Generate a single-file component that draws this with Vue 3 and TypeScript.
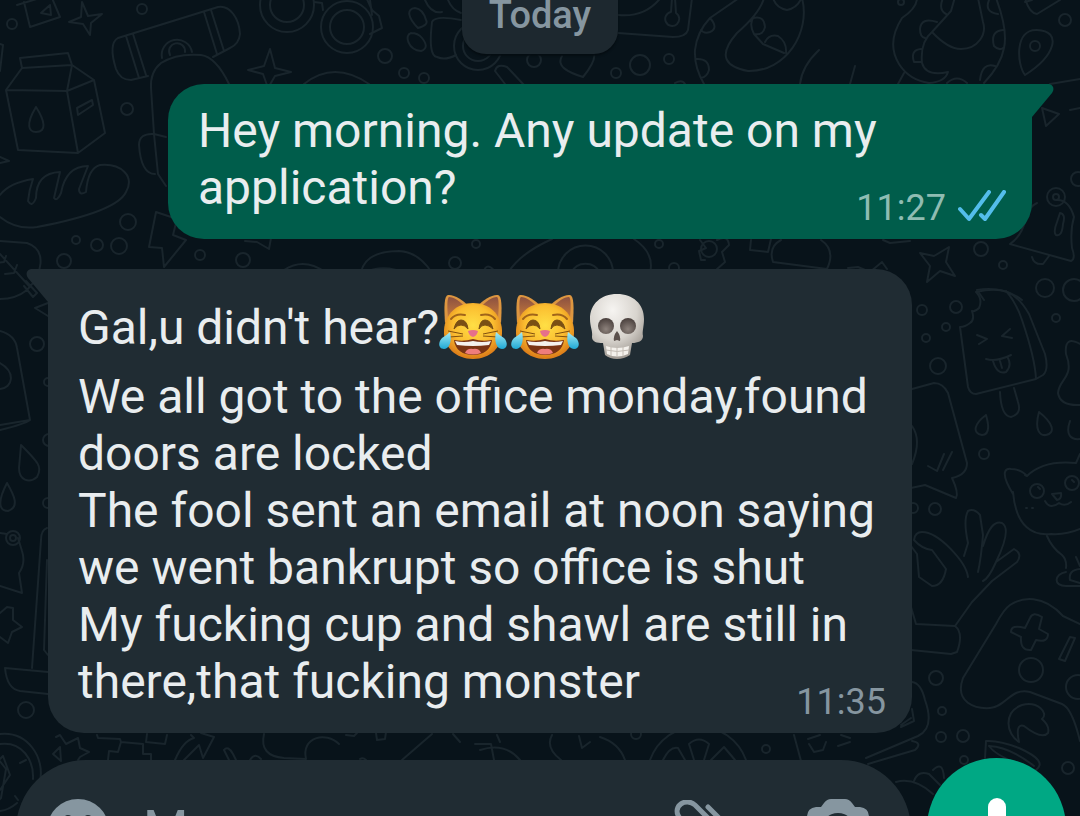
<script setup lang="ts">
import { ref } from 'vue'

type Circle = [number, number, number]

interface Message {
  id: number
  mine: boolean
  time: string
  lead?: string
  emojis: string[]
  lines: string[]
}

const draft = ref('')

const messages: Message[] = [
  {
    id: 1,
    mine: true,
    time: '11:27',
    emojis: [],
    lines: ['Hey morning. Any update on my application?'],
  },
  {
    id: 2,
    mine: false,
    time: '11:35',
    lead: "Gal,u didn't hear?",
    emojis: ['cat', 'cat', 'skull'],
    lines: [
      'We all got to the office monday,found doors are locked',
      'The fool sent an email at noon saying we went bankrupt so office is shut',
      'My fucking cup and shawl are still in there,that fucking monster',
    ],
  },
]

const dots: Circle[] = [
  [12, 24, 5], [142, 9, 5], [127, 109, 6], [128, 222, 8], [76, 240, 4], [97, 245, 6],
  [119, 246, 8], [64, 261, 7], [200, 255, 5], [243, 260, 7], [385, 56, 7], [404, 73, 5],
  [424, 78, 5], [534, 60, 7], [616, 73, 5], [640, 65, 10], [669, 59, 5], [901, 2, 3],
  [1065, 20, 6], [455, 263, 6], [476, 244, 4], [659, 244, 4], [674, 268, 5], [709, 249, 8],
  [981, 249, 7], [1003, 265, 4], [1045, 288, 9], [1074, 290, 11], [1078, 179, 7],
  [922, 310, 5], [956, 307, 6], [946, 327, 4], [926, 338, 4], [938, 366, 8], [1056, 318, 4],
  [984, 454, 5], [913, 508, 5], [935, 509, 6], [936, 678, 7], [942, 711, 4], [941, 737, 5],
  [963, 736, 6], [964, 760, 4], [1068, 768, 6], [1031, 670, 12], [1078, 687, 12],
  [37, 344, 7], [48, 382, 4], [49, 440, 6], [48, 503, 5], [26, 710, 8],
  [766, 749, 4], [636, 734, 5], [13, 538, 7], [13, 538, 3],
  [287, 5, 27], [287, 5, 17], [347, 27, 26], [347, 27, 17], [478, 46, 24], [478, 46, 15],
  [1035, 46, 5], [1056, 197, 9], [1056, 197, 3], [1037, 491, 7], [1072, 483, 7],
]

const doodles: string[] = [
  'M17 5 L40 -2 M24 2 L30 27 L60 17 L52 -2 M41 13 L50 5 L51 15 Z',
  'M82 2 L88 16 L102 14 L91 23 L90 35 L83 24 L69 22 L81 17 Z',
  'M20 58 L68 53 L72 65 L22 68 Z M22 68 L6 90 L67 91 L72 65 L94 80 L67 91 L78 153 L105 133 L94 80 M6 90 L18 150 L78 153',
  'M36 107 C25 125 29 132 36 132 C47 132 45 121 36 107 M77 108 L92 100 L93 105 L78 115 Z',
  'M0 44 L3 45 L0 71 M0 157 L9 161 L0 163',
  'M118 38 L218 7 C230 5 239 18 240 34 Q239 44 230 48 L213 57 M118 38 C111 42 111 53 116 69 Q120 80 131 80 L148 76 M126 36 L139 78 M133 34 L146 75 M204 12 L217 54 M211 10 L224 51',
  'M162 58 A15 15 0 1 1 192 52 M170 55 A8 8 0 1 1 185 52 M151 88 Q150 72 161 63 Q177 53 201 55 Q216 57 229 84 M151 88 L154 134 L166 137 M154 134 Q139 133 139 145 Q141 174 155 174 M154 134 L158 174 L166 186',
  'M270 49 L275 68 L291 72 L275 76 L268 88 L263 74 L248 70 L264 66 Z M304 84 Q334 60 369 84',
  'M0 195 Q9 183 33 179 Q29 190 28 201 Q32 208 36 198 Q36 173 60 172 L54 198 Q57 202 61 193 Q66 166 88 166 L79 189 Q79 196 86 192 Q88 168 100 165 C121 163 135 176 126 192 C118 209 74 220 37 227 Q16 230 0 217',
  'M156 212 L177 219 L173 235 L186 240 L164 267 L162 248 L149 247 Z M245 241 L257 242 L269 249 L271 238',
  'M0 241 L27 243 C48 250 42 275 27 290 Q16 299 0 299 M0 254 L30 287 M6 256 L4 262 L-3 263 M17 265 L14 273 L5 274 M24 286 L33 297 L37 293 L26 281',
  'M284 270 Q304 257 325 272 M361 272 Q366 251 399 251 Q419 252 432 273 M363 273 Q384 263 407 274 M483 273 Q487 260 496 273 M508 273 Q519 254 552 239 M634 239 Q655 253 650 273 M558 273 A27 27 0 0 1 613 273 M571 273 A16 16 0 0 1 600 273',
  'M700 240 L706 248 L699 251 L701 260 L705 260 M717 240 Q728 234 729 245 L722 252 L725 262 L716 270 L705 270 M751 240 L750 250 L768 252 L771 239 M781 240 Q768 247 773 262 L827 269 Q836 250 821 240',
  'M366 -3 L372 10 L379 16 L382 28 L370 34 M314 2 L322 3 L323 10 M370 0 L372 15',
  'M415 8 C406 9 408 18 418 28 Q429 25 426 20 Q423 9 415 8 M411 33 C404 35 408 50 421 51 Q430 48 422 38 Q418 33 411 33 M425 0 Q431 14 442 12 M448 0 Q452 10 461 13 M461 20 Q435 15 432 22 Q428 56 437 57 Q445 61 456 55 M495 71 Q497 63 507 67 L525 86 M495 71 L505 84',
  'M562 56 C556 66 567 72 583 77 Q596 61 594 54 M618 15 Q646 18 662 -4 M618 33 L673 37 Q686 37 688 30 L692 -2 M672 -2 L671 12 A7 7 0 1 0 676 13 L675 -2',
  'M739 -2 L710 18 Q697 32 695 50 Q694 67 704 84 M764 -2 Q760 13 737 33 C716 57 727 67 748 71 C786 72 811 32 802 -2 M773 -2 Q776 8 787 10 Q797 8 801 -1 M753 18 Q749 25 754 34 Q763 36 765 27 Q764 15 753 18 M754 34 L763 44 L784 53 M765 42 Q769 34 778 36 Q787 42 786 53 M710 18 Q719 28 710 32 Q704 34 701 30 M696 59 Q709 58 709 70 Q707 77 701 78',
  'M800 84 Q802 66 819 50 M850 84 L855 66 M917 -2 Q917 8 902 18 Q886 43 899 64 Q909 80 929 83 Q945 82 948 72 Q926 77 922 63 Q920 42 932 32 L951 11 L955 -3 M932 32 Q948 49 961 49 C978 49 987 34 983 22 L978 -2 M996 -2 Q1008 30 1004 48 Q1001 65 984 83 M937 22 Q921 17 920 29 Q920 37 925 38 M921 49 Q910 50 914 62 L921 62 M943 -2 Q938 10 946 14 M989 0 Q984 12 998 14 M1003 30 Q990 31 994 46 Q999 51 1003 48 M980 80 Q982 62 995 66 M947 83 Q957 74 967 83 M904 73 L898 84 M675 83 Q682 79 685 84',
  'M1025 75 C1017 65 1014 29 1037 30 C1063 31 1055 56 1025 75 M1025 -2 Q1029 13 1037 14 L1060 0 M1025 2 L1032 0 M1050 84 L1080 79 M1042 108 L1059 114 L1046 126 Z M1070 110 L1080 108',
  'M1037 203 Q1028 207 1026 218 Q1022 236 1010 244 L1071 261 Q1076 259 1072 248 Q1070 230 1074 217 Q1069 199 1056 200 M1032 257 Q1034 265 1043 264 L1049 256 M1060 213 Q1066 214 1063 224 Q1062 237 1056 235 Q1053 232 1057 222 Z',
  'M920 253 L934 256 L949 247 L946 262 L955 276 L940 271 L927 282 L930 266 Z M848 268 L858 267 L870 272 L882 262 L887 269 M883 240 L890 243 L910 241 M977 290 Q1004 286 1022 300 M977 290 L984 300',
  'M976 292 C1002 286 1016 291 1029 314 L1045 354 Q1049 370 1043 375 L1036 379 L976 394 Q970 394 968 387 L960 327 Q965 327 970 323 Q975 320 972 311 Q975 312 979 308 Q983 299 976 292 M1006 291 Q1016 302 1022 320 Q1035 358 1036 379 M977 335 L987 339 L979 344 M1010 329 L1002 336 L1012 338 M986 359 Q997 362 1011 355 M993 361 Q997 375 1006 372 Q1012 366 1008 358 M1000 361 L1002 368 M1000 392 Q1001 416 1011 417 Q1022 414 1018 402 L1014 388',
  'M1080 344 Q1064 335 1066 354 C1075 377 1059 379 1058 393 Q1060 406 1080 405 M986 415 C974 424 972 433 982 435 C991 435 988 422 986 415 M1039 412 C1034 430 1040 436 1046 435 C1056 433 1053 423 1039 412 M1070 421 C1065 435 1071 440 1080 439',
  'M912 389 L934 383 Q943 383 948 393 L967 463 Q967 475 952 478 Q959 493 956 498 L925 485 L911 488 M912 426 Q922 440 912 464 M928 466 L937 471 L944 454 M943 470 L952 452',
  'M1013 494 C999 471 1006 468 1011 469 Q1021 469 1027 476 C1039 464 1055 461 1076 463 L1080 454 M1027 476 L1025 475 M1013 492 C1016 528 1034 536 1051 534 Q1066 535 1080 529 M1045 501 Q1050 510 1059 503 Q1065 507 1071 502 M1052 494 L1061 493 Q1062 499 1057 500 Z M1026 508 L1027 508 M1032 508 L1033 508 M1038 487 L1040 489 M1072 480 L1074 482',
  'M968 511 Q974 508 980 515 L983 535 Q981 559 978 572 M968 511 Q963 520 968 543 L964 556 M983 546 Q991 519 1002 523 Q1012 529 996 562 Q989 578 983 581 M996 562 L1014 549 Q1023 554 1017 562 L992 581 L972 602 L955 626 M968 577 C966 562 939 532 922 532 Q915 532 914 540 Q922 549 932 550 L946 569 Q943 586 932 586 L919 577 L917 554 L911 546 M911 607 L916 624 L955 626 Q964 633 957 652 L951 654 L911 650',
  'M1047 536 Q1052 548 1062 555 Q1067 560 1066 568 M1066 572 C1054 574 1053 586 1066 586 L1080 586 M1080 569 Q1068 570 1070 580 L1080 583 M1076 557 L1080 566',
  'M1080 624 L1063 616 C1043 594 1022 597 1010 605 Q1004 609 996 624 L963 678 C954 703 976 709 990 708 C1006 707 1011 687 1030 692 L1062 704 Q1072 708 1080 741 M1030 618 Q1033 611 1042 617 L1039 629 L1048 634 Q1048 643 1036 640 L1031 650 Q1020 651 1021 637 L1011 632 Q1011 624 1025 628 Z M1070 637 L1075 638 L1065 661 L1059 659 Z',
  'M1019 742 C1006 734 1003 712 1022 705 C1038 701 1049 713 1042 719 Q1050 726 1048 733 Q1042 740 1024 726 Q1015 723 1019 742 M985 758 L986 741 Q999 740 1019 748 C1039 757 1044 764 1036 770 M989 746 Q1010 747 1034 766 M989 746 Q996 756 1022 765',
  'M912 682 Q921 683 925 700 Q935 728 918 736 L866 758 M912 741 Q923 743 915 750 L868 764 M794 735 L801 761 M808 739 L820 735 M809 744 L814 752 L823 750 L826 742 M841 735 L850 738 M838 746 L850 742 M901 725 L911 718 M912 709 L914 721 L901 727 M896 782 Q914 777 933 794 M914 781 Q918 770 929 774 L940 785 M933 770 Q943 760 944 778',
  'M600 737 Q619 743 625 760 M650 760 A51 51 0 0 1 746 760 M663 760 Q670 746 678 748 L685 760 M694 760 L689 744 Q699 735 709 744 L704 760 M711 760 L724 747 L735 760',
  'M264 734 Q259 756 284 758 L306 759 C301 737 326 731 339 744 M402 760 L432 734 M346 735 L354 736 L357 733 M376 733 L377 740 L385 739 L386 732 M453 734 L460 742 M360 759 Q363 757 366 760 M475 744 L491 744 L494 760',
  'M97 735 L98 738 L120 739 L121 742 L143 744 L143 754 L151 754 L151 760 M121 742 L118 752 L109 751 L108 760 M147 734 L146 742 L165 744 L167 735 M175 760 Q183 741 194 738 L191 735 M184 760 L199 745 L203 758 L214 737 L201 733 M224 750 Q228 745 233 754 L236 760 M224 750 L229 760 M250 760 Q255 752 261 759',
  'M56 737 L60 735 L66 744 L78 738 L80 748 L89 752 L80 757 L78 760 M61 761 L53 754 L60 747 Z',
  'M0 734 C28 731 45 758 40 781 M0 744 C22 741 34 760 33 779 M3 756 L-1 760 L6 769 L1 798 L-1 800 M3 756 L10 775 L0 790 M20 763 L26 760 M0 811 Q9 810 17 803 M15 796 L18 800',
  'M0 331 Q15 335 17 348 L30 420 Q25 424 0 430 M30 420 L0 425 M0 363 C16 372 13 388 0 389 M21 445 C38 462 43 467 37 477 C29 484 19 480 19 468 Z M7 483 C-7 510 5 511 8 511 C20 507 14 495 7 483 M0 533 L7 534 M18 538 L22 551 Q26 563 19 573 L22 593 L0 586 M0 613 L7 607 L13 608 L13 620 L22 627 L12 632 L8 643 L0 637 M47 528 Q41 530 41 540 L32 668 M47 560 L44 650 L48 655 M5 668 L48 672 M5 668 Q7 689 20 691 L48 694 M48 303 L35 308 L48 316',
  'M480 750 Q505 742 520 760 M497 735 L500 742 M552 735 Q545 748 561 760 M579 736 L582 748 L590 742',
]
</script>

<template>
  <main class="screen">
    <svg class="wallpaper" width="1080" height="816" viewBox="0 0 1080 816" aria-hidden="true">
      <circle v-for="(d, i) in dots" :key="'c' + i" :cx="d[0]" :cy="d[1]" :r="d[2]" />
      <path v-for="(p, i) in doodles" :key="'p' + i" :d="p" />
    </svg>

    <svg class="defs" width="0" height="0" aria-hidden="true">
      <defs>
        <radialGradient id="fur" cx="50%" cy="40%" r="58%">
          <stop offset="0" stop-color="#ffdf45" />
          <stop offset="0.6" stop-color="#fbbd30" />
          <stop offset="1" stop-color="#dd7f1a" />
        </radialGradient>
        <linearGradient id="ear" x1="0" y1="0" x2="0" y2="1">
          <stop offset="0" stop-color="#8c5140" />
          <stop offset="1" stop-color="#c67a3c" />
        </linearGradient>
        <linearGradient id="tear" x1="0" y1="0" x2="0" y2="1">
          <stop offset="0" stop-color="#a5ecf6" />
          <stop offset="1" stop-color="#1fa8d4" />
        </linearGradient>
        <radialGradient id="bone" cx="42%" cy="25%" r="75%">
          <stop offset="0" stop-color="#f6f4f1" />
          <stop offset="0.6" stop-color="#d8d4ce" />
          <stop offset="1" stop-color="#a09a93" />
        </radialGradient>
        <radialGradient id="socket" cx="50%" cy="70%" r="65%">
          <stop offset="0" stop-color="#8d827c" />
          <stop offset="1" stop-color="#4d4340" />
        </radialGradient>
      </defs>
    </svg>

    <section class="chat">
      <div class="day">Today</div>

      <article
        v-for="m in messages"
        :key="m.id"
        class="bubble"
        :class="m.mine ? 'mine' : 'theirs'"
      >
        <svg class="tail" width="22" height="34" viewBox="0 0 22 34" aria-hidden="true">
          <path d="M0 0 H16 C21 0 23 5 20 9 L0 33 Z" />
        </svg>
        <p v-if="m.lead" class="lead">
          <span>{{ m.lead }}</span>
          <template v-for="(e, i) in m.emojis" :key="i">
            <svg v-if="e === 'cat'" class="emoji" viewBox="0 0 72 68" role="img" aria-label="😹">
              <path d="M6 30 C5 14 5 3 9 2 C14 1 25 7 29 13 Z" fill="#dd9640" />
              <path d="M62 30 C63 14 63 3 59 2 C54 1 43 7 39 13 Z" fill="#dd9640" />
              <path d="M9 25 C8 14 8 5 10 4 C15 4 22 9 25 13 Z" fill="url(#ear)" />
              <path d="M59 25 C60 14 60 5 58 4 C53 4 46 9 43 13 Z" fill="url(#ear)" />
              <path d="M34 10 C50 10 62 21 63 37 C64 54 51 66 34 66 C17 66 4 54 5 37 C6 21 18 10 34 10 Z" fill="url(#fur)" />
              <path d="M12 26 Q17 20 26 22 M42 22 Q51 20 56 26" fill="none" stroke="#a0641a" stroke-width="2" stroke-linecap="round" />
              <path d="M15 36 Q17 27 22 27 Q28 27 29 36 Q26 32 22 32 Q18 32 15 36 M40 36 Q41 27 46 27 Q52 27 54 36 Q50 32 46 32 Q42 32 40 36" fill="#7a4f14" stroke="#7a4f14" stroke-width="1" stroke-linejoin="round" />
              <path d="M9 38 L24 41 M10 44 L24 43 M44 41 L59 38 M44 43 L59 44" stroke="#80500f" stroke-width="1" />
              <path d="M29 38 Q34 36 39 38 Q38 43 34 44 Q30 43 29 38" fill="#e6708a" />
              <path d="M15 47 Q25 49 34 46 Q43 49 53 47 C52 57 44 62 34 62 C24 62 16 57 15 47 Z" fill="#7a3413" />
              <path d="M16 48 Q25 50 34 48 Q43 50 52 48 L50 52 Q34 54 18 52 Z" fill="#f4f1ec" />
              <path d="M26 60 Q28 55 34 56 Q40 55 42 60 Q34 63 26 60" fill="#ef7d7c" />
              <path d="M11 39 C13 47 11 56 5 56 C-1 56 -1 49 3 45 Q8 42 11 39" fill="url(#tear)" />
              <path d="M57 39 C55 47 57 56 63 56 C69 56 69 49 65 45 Q60 42 57 39" fill="url(#tear)" />
            </svg>
            <svg v-else class="emoji" viewBox="0 0 72 68" role="img" aria-label="💀">
              <path d="M34 1 C50 1 61 11 61 26 C61 34 59 38 60 43 C60 48 55 50 49 50 L47 62 Q41 66 34 66 Q27 66 22 62 L20 50 C14 50 9 49 9 44 C10 38 7 34 7 26 C7 11 18 1 34 1 Z" fill="url(#bone)" />
              <ellipse cx="23" cy="33" rx="8" ry="8" fill="url(#socket)" />
              <ellipse cx="45" cy="33" rx="8" ry="8" fill="url(#socket)" />
              <path d="M34 38 Q38 43 37 48 L34 47 L31 48 Q30 43 34 38" fill="#5b504c" />
              <path d="M23 53 Q34 57 46 53 L45 61 Q34 66 24 61 Z" fill="#f4f1ec" />
              <path d="M23 57 Q34 60 46 57 M28 54 V63 M34 55 V64 M40 54 V63" fill="none" stroke="#c3bcb4" stroke-width="1" />
            </svg>
          </template>
        </p>
        <p v-for="(line, i) in m.lines" :key="i" class="line">{{ line }}</p>
        <footer class="meta">
          <time>{{ m.time }}</time>
          <svg v-if="m.mine" class="ticks" width="48" height="36" viewBox="0 0 48 36" role="img" aria-label="Read">
            <path d="M2 19 L11 29 L31 2 M23 25 L27 29 L46 2" />
          </svg>
        </footer>
      </article>
    </section>

    <form class="composer" @submit.prevent>
      <div class="field">
        <button type="button" class="icon" aria-label="Emoji">
          <svg width="62" height="62" viewBox="0 0 62 62">
            <circle cx="31" cy="31" r="31" fill="#8696a0" />
            <circle cx="21" cy="21" r="5" fill="#202c33" />
            <circle cx="41" cy="21" r="5" fill="#202c33" />
            <path d="M14 36 H48 Q44 50 31 50 Q18 50 14 36" fill="#202c33" />
          </svg>
        </button>
        <input v-model="draft" type="text" placeholder="Message" aria-label="Message" />
        <button type="button" class="icon clip" aria-label="Attach">
          <svg width="60" height="60" viewBox="0 0 60 60">
            <path d="M35 7 L52 24 C64 38 46 56 32 43 L6 17 C-1 6 13 -3 22 5 L46 29 C54 38 44 46 37 39 L18 20" fill="none" stroke="#8696a0" stroke-width="5" stroke-linecap="round" />
          </svg>
        </button>
        <button type="button" class="icon" aria-label="Camera">
          <svg width="62" height="62" viewBox="0 0 62 62">
            <path d="M24 0 H38 Q42 0 45 4 L48 8 H53 Q62 9 62 18 V48 Q62 56 54 56 H8 Q0 56 0 48 V18 Q0 9 9 8 H14 L17 4 Q20 0 24 0 Z" fill="#8696a0" />
            <circle cx="31" cy="31" r="17" fill="#202c33" />
            <circle cx="31" cy="31" r="10" fill="#8696a0" />
          </svg>
        </button>
      </div>
      <button type="button" class="mic" aria-label="Record voice message">
        <svg width="50" height="60" viewBox="0 0 50 60">
          <rect x="16" y="0" width="18" height="38" rx="9" fill="#fff" />
          <path d="M5 28 Q6 47 25 47 Q44 47 45 28 M25 47 V60" fill="none" stroke="#fff" stroke-width="6" />
        </svg>
      </button>
    </form>
  </main>
</template>

<style>
html,
body {
  background: #08131a;
}
</style>

<style scoped>
.screen {
  position: relative;
  height: 100vh;
  overflow: hidden;
  background: #08131a;
  font-family: Roboto, 'Liberation Sans', sans-serif;
}

.wallpaper {
  position: absolute;
  top: 0;
  left: 0;
  fill: none;
  stroke: #19252c;
  stroke-width: 2;
  stroke-linecap: round;
  stroke-linejoin: round;
}

.defs {
  position: absolute;
}

.chat {
  position: relative;
  display: flex;
  flex-direction: column;
  gap: 30px;
}

/* The list is scrolled, so the day label is partly above the window. */
.day {
  align-self: center;
  box-sizing: border-box;
  height: 78px;
  margin-top: -24px;
  padding: 0 27px;
  border-radius: 24px;
  background: #1d282f;
  box-shadow: 0 2px 2px #050d12;
  color: #8696a0;
  font-size: 38px;
  font-weight: 500;
  line-height: 78px;
}

.bubble {
  position: relative;
  box-sizing: border-box;
  width: 80%;
  margin: 0 48px;
  border-radius: 36px;
  color: #e9edef;
  font-size: 48px;
  line-height: 57px;
}

.mine {
  align-self: flex-end;
  padding: 18px 30px 23px;
  border-top-right-radius: 0;
  background: #005d4b;
}

.theirs {
  align-self: flex-start;
  padding: 20px 30px 23px;
  border-top-left-radius: 0;
  background: #202c33;
}

.tail {
  position: absolute;
  top: 0;
  left: 100%;
}

.tail path {
  fill: #005d4b;
}

.theirs .tail {
  right: 100%;
  left: auto;
  transform: scaleX(-1);
}

.theirs .tail path {
  fill: #202c33;
}

.lead,
.line {
  margin: 0;
}

.lead {
  display: flex;
  align-items: center;
  height: 76px;
  margin-bottom: 3px;
}

.emoji {
  width: 72px;
  height: 68px;
}

.meta {
  position: absolute;
  right: 26px;
  bottom: 10px;
  display: flex;
  align-items: center;
  gap: 12px;
  color: #8696a0;
  font-size: 36px;
  line-height: 42px;
}

.mine .meta {
  color: #8fbcb2;
}

.ticks {
  fill: none;
  stroke: #53bdeb;
  stroke-width: 4;
  stroke-linecap: round;
  stroke-linejoin: round;
}

.composer {
  position: relative;
  display: flex;
  align-items: center;
  gap: 16px;
  margin-top: 23px;
  padding: 0 14px 0 16px;
}

.field {
  display: flex;
  flex: 1;
  align-items: center;
  box-sizing: border-box;
  min-width: 0;
  height: 140px;
  margin-top: 4px;
  padding: 0 42px 0 31px;
  border-radius: 70px;
  background: #202c33;
}

.icon,
.mic {
  display: flex;
  flex: none;
  align-items: center;
  justify-content: center;
  padding: 0;
  border: 0;
  background: none;
}

.clip {
  margin-right: 74px;
}

input {
  flex: 1;
  min-width: 0;
  margin-left: 34px;
  padding: 0;
  border: 0;
  outline: 0;
  background: none;
  color: #e9edef;
  font: 52px/62px Roboto, 'Liberation Sans', sans-serif;
}

input::placeholder {
  color: #8696a0;
  opacity: 1;
}

.mic {
  width: 139px;
  height: 140px;
  border-radius: 50%;
  background: #00a884;
}
</style>
